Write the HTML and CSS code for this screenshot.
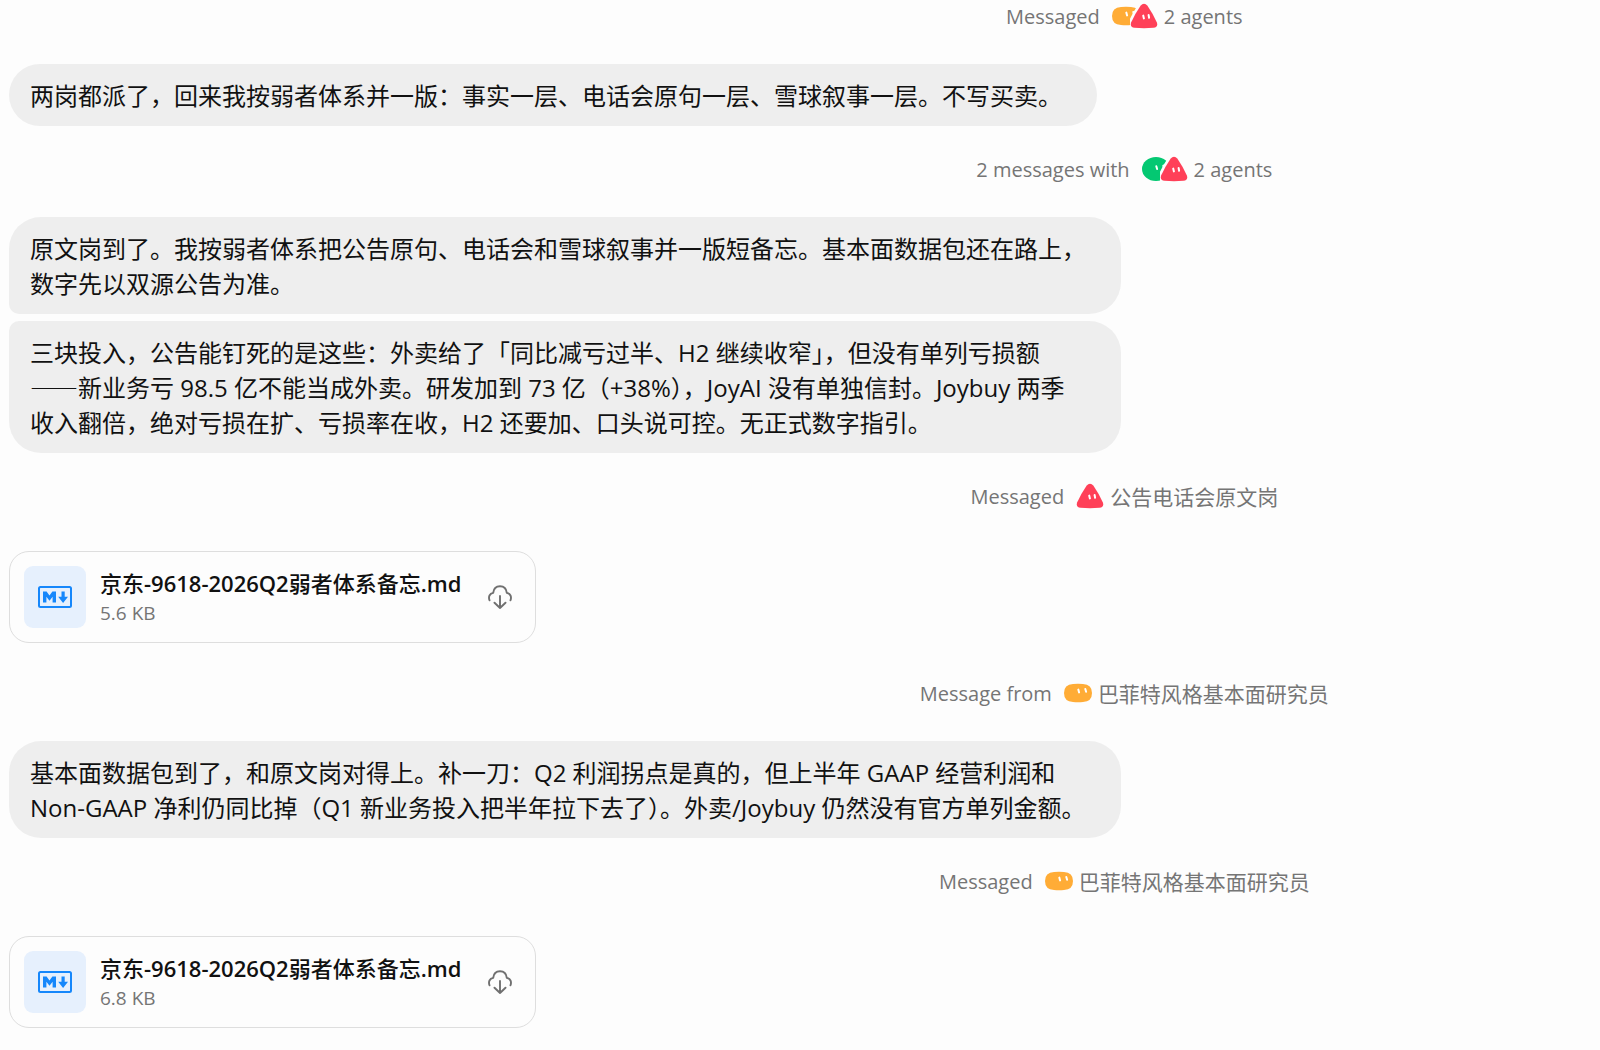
FILE: index.html
```html
<!DOCTYPE html>
<html lang="zh-CN">
<head>
<meta charset="utf-8">
<meta name="viewport" content="width=device-width, initial-scale=1">
<title>Chat</title>
<link rel="stylesheet" href="styles.css">
</head>
<body>
<svg class="sprite" aria-hidden="true">
  <symbol id="tri" viewBox="0 1 28 28">
    <path class="halo" d="M10.500 3.700Q14 -.3 17.500 3.700Q23.500 12.500 26.900 20.500Q28.300 25.300 23.500 25.800Q14 26.600 4.500 25.800Q-.3 25.300 1.100 20.500Q4.500 12.500 10.500 3.700Z"/>
    <path fill="#ff4058" d="M10.500 3.700Q14 -.3 17.500 3.700Q23.500 12.500 26.900 20.500Q28.300 25.300 23.500 25.800Q14 26.600 4.500 25.800Q-.3 25.300 1.100 20.500Q4.500 12.500 10.500 3.700Z"/>
    <path stroke="#fff" stroke-width="2" stroke-linecap="round" d="M13.200 13.600l.7 2.800M18.600 13l.5 2.800"/>
  </symbol>
  <symbol id="pill" viewBox="0 1 28 28">
    <path fill="#ffac36" d="M9 5Q14 4.600 19 5Q28 5.500 28 14Q28 22.500 19 23Q14 23.400 9 23Q0 22.500 0 14Q0 5.500 9 5Z"/>
    <path stroke="#fff" stroke-width="2" stroke-linecap="round" d="M14.300 10.600l.8 2.800M21.300 10l.8 2.700"/>
  </symbol>
  <symbol id="oval" viewBox="0 1 28 28">
    <ellipse cx="14" cy="14" rx="14" ry="12" fill="#04c872"/>
    <path stroke="#fff" stroke-width="2" stroke-linecap="round" d="M14.300 11.200l.8 2.800M21.300 10.600l.8 2.700"/>
  </symbol>
  <symbol id="md" viewBox="0 0 34 22">
    <rect x="1" y="1" width="32" height="20" rx="1.500" fill="none" stroke="#1687fb" stroke-width="2"/>
    <path fill="#1687fb" d="M5 16.500V5.500h3.600l2.900 4 2.900-4H18v11h-3.400v-5.700l-3.100 4-3.100-4v5.700ZM23.500 5.500h3.200v5.300H30L25.100 17 20.200 10.800h3.300Z"/>
  </symbol>
  <symbol id="download" viewBox="0 0 24 24">
    <path fill="none" stroke="#707070" stroke-width="1.900" stroke-linecap="round" stroke-linejoin="round" d="M1.500 15.300C.2 11.500 1.600 8.700 5.200 7.900C5.600 3.800 8.300 1.200 12 1.200s6.400 2.600 6.800 6.700c3.600.8 5 3.600 3.700 7.400M12 11V23M6.500 17.700L12 23 17.500 17.700"/>
  </symbol>
</svg>

<main class="chat">
  <div class="meta"><span class="en">Messaged</span>
    <span class="avatars"><svg class="avatar"><use href="#pill"/></svg><svg class="avatar"><use href="#tri"/></svg></span>
    <span class="en">2 agents</span></div>

  <div class="group">
    <p class="bubble">两岗都派了，回来我按弱者体系并一版：事实一层、电话会原句一层、雪球叙事一层。不写买卖。</p>
  </div>

  <div class="meta"><span class="en">2 messages with</span>
    <span class="avatars"><svg class="avatar"><use href="#oval"/></svg><svg class="avatar"><use href="#tri"/></svg></span>
    <span class="en">2 agents</span></div>

  <div class="group">
    <p class="bubble wide">原文岗到了。我按弱者体系把公告原句、电话会和雪球叙事并一版短备忘。基本面数据包还在路上，数字先以双源公告为准。</p>
    <p class="bubble wide">三块投入，公告能钉死的是这些：外卖给了「同比减亏过半、H2 继续收窄」，但没有单列亏损额<br><span class="dash">——</span>新业务亏 98.5 亿不能当成外卖。研发加到 73 亿（+38%），JoyAI 没有单独信封。Joybuy 两季<br>收入翻倍，绝对亏损在扩、亏损率在收，H2 还要加、口头说可控。无正式数字指引。</p>
  </div>

  <div class="meta"><span class="en">Messaged</span>
    <span class="avatars"><svg class="avatar"><use href="#tri"/></svg></span>
    <span>公告电话会原文岗</span></div>

  <article class="file">
    <span class="tile"><svg class="md"><use href="#md"/></svg></span>
    <div class="info">
      <h2 class="name">京东<span class="en">-9618-2026Q2</span>弱者体系备忘<span class="en">.md</span></h2>
      <p class="size">5.6 KB</p>
    </div>
    <button class="get" type="button" aria-label="Download"><svg><use href="#download"/></svg></button>
  </article>

  <div class="meta"><span class="en">Message from</span>
    <span class="avatars"><svg class="avatar"><use href="#pill"/></svg></span>
    <span>巴菲特风格基本面研究员</span></div>

  <div class="group">
    <p class="bubble wide">基本面数据包到了，和原文岗对得上。补一刀：Q2 利润拐点是真的，但上半年 GAAP 经营利润和<br>Non-GAAP 净利仍同比掉（Q1 新业务投入把半年拉下去了）。外卖/Joybuy 仍然没有官方单列金额。</p>
  </div>

  <div class="meta"><span class="en">Messaged</span>
    <span class="avatars"><svg class="avatar"><use href="#pill"/></svg></span>
    <span>巴菲特风格基本面研究员</span></div>

  <article class="file">
    <span class="tile"><svg class="md"><use href="#md"/></svg></span>
    <div class="info">
      <h2 class="name">京东<span class="en">-9618-2026Q2</span>弱者体系备忘<span class="en">.md</span></h2>
      <p class="size">6.8 KB</p>
    </div>
    <button class="get" type="button" aria-label="Download"><svg><use href="#download"/></svg></button>
  </article>
</main>
</body>
</html>
```
FILE: styles.css
```css
* { box-sizing: border-box; }

body {
  margin: 0;
  background: #fdfdfd;
  color: #111;
  font-family: "Open Sans", "Noto Sans CJK SC", sans-serif;
}

h2, p { margin: 0; }

.sprite { position: absolute; width: 0; height: 0; }

.chat { padding: 3px 9px 22px; }

/* Status lines between messages */
.meta {
  display: flex;
  align-items: center;
  justify-content: center;
  height: 28px;
  margin: 30px 0 33px;
  padding-left: 41%;
  color: #757575;
  font-size: 21px;
  line-height: 26px;
  white-space: nowrap;
}
.meta:first-child { margin-top: 0; }
.meta .en { font-size: 20px; line-height: 28px; }

.avatars { display: flex; margin: 0 6px 0 12px; }
.avatar { width: 28px; height: 28px; }
.avatar + .avatar { margin-left: -10px; }
.halo { fill: none; stroke: #fdfdfd; stroke-width: 5px; }

/* Message bubbles */
.group {
  display: flex;
  flex-direction: column;
  align-items: flex-start;
  gap: 7px;
}
.bubble {
  max-width: 100%;
  padding: 14px 35px 13px 21px;
  border-radius: 32px;
  background: #eee;
  font-size: 24px;
  line-height: 35px;
}
.bubble.wide { width: 1112px; padding-right: 21px; }
.bubble:not(:last-child) { border-bottom-left-radius: 10px; }
.bubble:not(:first-child) { border-top-left-radius: 10px; }
.dash { font-family: "Noto Sans CJK SC", sans-serif; line-height: 1; }

/* Attachments */
.file {
  display: flex;
  align-items: center;
  width: 527px;
  max-width: 100%;
  margin: 40px 0 37px;
  padding: 14px 23px 14px 14px;
  border: 1px solid #dedede;
  border-radius: 20px;
}
.tile {
  display: grid;
  place-items: center;
  width: 62px;
  height: 62px;
  border-radius: 9px;
  background: #e6f0fd;
}
.md { width: 34px; height: 22px; }
.info { flex: 1; padding-left: 14px; white-space: nowrap; }
.name { font-size: 22px; font-weight: 500; line-height: 32px; }
.name .en { font-weight: 600; line-height: 1; }
.size { color: #757575; font-size: 19px; line-height: 28px; }
.get {
  display: flex;
  padding: 0;
  border: 0;
  background: none;
  cursor: pointer;
}
.get svg { width: 24px; height: 24px; }
```
